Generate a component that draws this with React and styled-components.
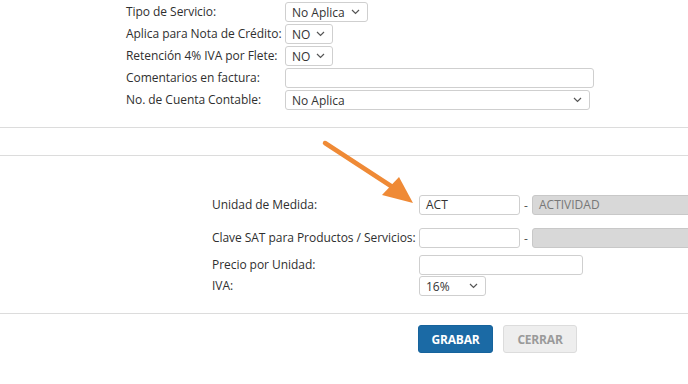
import React from "react";
import styled, { createGlobalStyle } from "styled-components";

const Global = createGlobalStyle`
  html, body { margin: 0; padding: 0; background: #fff; }
  body {
    font-family: "Open Sans", "Noto Sans", sans-serif;
    font-size: 12px;
    color: #333;
    width: 688px;
    height: 384px;
    overflow: hidden;
  }
`;

const Page = styled.div`
  position: relative;
  width: 688px;
  height: 384px;
  overflow: hidden;
`;

const TopForm = styled.div`
  display: grid;
  grid-template-columns: 159px auto;
  row-gap: 2px;
  padding: 2px 0 17px 126px;
  align-items: center;
`;

const Divider = styled.div`
  height: 1px;
  background: #dcdcdc;
`;

const Spacer = styled.div`
  height: ${(p) => p.h}px;
`;

const BottomForm = styled.div`
  display: grid;
  grid-template-columns: 207px auto;
  padding: 39px 0 17px 212px;
  align-items: center;
`;

const Label = styled.div`
  height: 20px;
  line-height: 20px;
  white-space: nowrap;
  letter-spacing: -0.05px;
  color: #2f2f2f;
  margin-top: ${(p) => p.mt || 0}px;
`;

const Cell = styled.div`
  display: flex;
  align-items: center;
  height: 20px;
  margin-top: ${(p) => p.mt || 0}px;
`;

const Input = styled.div`
  box-sizing: border-box;
  width: ${(p) => p.w}px;
  height: ${(p) => p.h || 20}px;
  border: 1px solid ${(p) => (p.disabled ? "#c8c8c8" : "#cfcfcf")};
  border-radius: 3px;
  background: ${(p) => (p.disabled ? "#d8d8d8" : "#fff")};
  color: ${(p) => (p.disabled ? "#777" : "#333")};
  padding: 0 6px;
  line-height: 18px;
  white-space: nowrap;
  overflow: hidden;
  flex-shrink: 0;
`;

const SelectBox = styled.div`
  box-sizing: border-box;
  width: ${(p) => p.w}px;
  height: 20px;
  border: 1px solid #cfcfcf;
  border-radius: 3px;
  background: #fff;
  padding: 0 7px 0 6px;
  display: flex;
  align-items: center;
  justify-content: space-between;
  white-space: nowrap;
`;

const Dash = styled.span`
  width: 12px;
  text-align: center;
  color: #555;
  flex-shrink: 0;
`;

const ButtonBar = styled.div`
  display: flex;
  gap: 10px;
  padding: 11px 0 0 418px;
`;

const Button = styled.button`
  box-sizing: border-box;
  width: ${(p) => p.w}px;
  height: 28px;
  border-radius: 3px;
  font-family: "Open Sans", "Noto Sans", sans-serif;
  font-size: 12px;
  font-weight: 700;
  letter-spacing: -0.2px;
  cursor: pointer;
  border: 1px solid ${(p) => (p.primary ? "#16639c" : "#dcdcdc")};
  background: ${(p) => (p.primary ? "#1b6aa5" : "#eeeeee")};
  color: ${(p) => (p.primary ? "#fff" : "#9a9a9a")};
`;

const ArrowSvg = styled.svg`
  position: absolute;
  left: 318px;
  top: 136px;
  pointer-events: none;
`;

const Chevron = () => (
  <svg width="9" height="6" viewBox="0 0 9 6">
    <path d="M1 1 L4.5 4.5 L8 1" fill="none" stroke="#555" strokeWidth="1.2" />
  </svg>
);

const Select = ({ w, value }) => (
  <SelectBox w={w}>
    <span>{value}</span>
    <Chevron />
  </SelectBox>
);

export default function App() {
  return (
    <Page>
      <Global />
      <TopForm>
        <Label>Tipo de Servicio:</Label>
        <Cell><Select w={83} value="No Aplica" /></Cell>
        <Label>Aplica para Nota de Crédito:</Label>
        <Cell><Select w={48} value="NO" /></Cell>
        <Label>Retención 4% IVA por Flete:</Label>
        <Cell><Select w={48} value="NO" /></Cell>
        <Label>Comentarios en factura:</Label>
        <Cell><Input w={309} /></Cell>
        <Label>No. de Cuenta Contable:</Label>
        <Cell><Select w={305} value="No Aplica" /></Cell>
      </TopForm>
      <Divider />
      <Spacer h={27} />
      <Divider />
      <BottomForm>
        <Label>Unidad de Medida:</Label>
        <Cell>
          <Input w={101}>ACT</Input>
          <Dash>-</Dash>
          <Input w={170} disabled>ACTIVIDAD</Input>
        </Cell>
        <Label mt={13}>Clave SAT para Productos / Servicios:</Label>
        <Cell mt={13}>
          <Input w={101} />
          <Dash>-</Dash>
          <Input w={170} disabled />
        </Cell>
        <Label mt={7}>Precio por Unidad:</Label>
        <Cell mt={7}><Input w={164} /></Cell>
        <Label mt={1}>IVA:</Label>
        <Cell mt={1}><Select w={67} value="16%" /></Cell>
      </BottomForm>
      <Divider />
      <ButtonBar>
        <Button primary w={75}>GRABAR</Button>
        <Button w={74}>CERRAR</Button>
      </ButtonBar>
      <ArrowSvg width="100" height="72" viewBox="0 0 100 72">
        <line x1="7" y1="7" x2="76" y2="52" stroke="#ef8a36" strokeWidth="4.5" strokeLinecap="round" />
        <polygon points="95,67 64,59 81,41" fill="#ef8a36" />
      </ArrowSvg>
    </Page>
  );
}
